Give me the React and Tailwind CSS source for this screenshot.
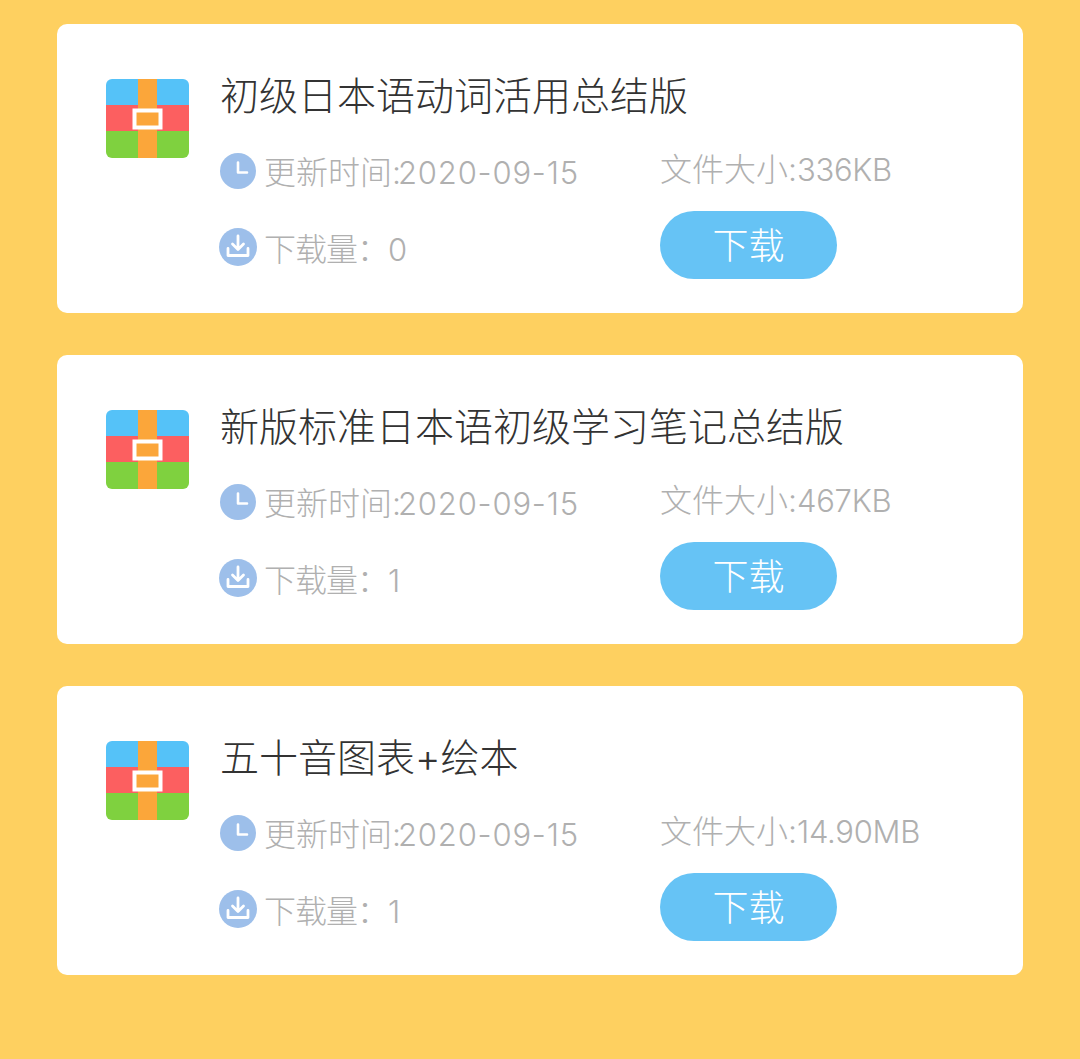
import React from 'react';

const files = [
  { title: '初级日本语动词活用总结版', size: '336KB', downloads: 0 },
  { title: '新版标准日本语初级学习笔记总结版', size: '467KB', downloads: 1 },
  { title: '五十音图表+绘本', size: '14.90MB', downloads: 1 },
];

const ArchiveIcon = () => (
  <svg width="83" height="79" viewBox="0 0 83 79" className="shrink-0 mt-[6px]">
    <defs>
      <clipPath id="archive-clip">
        <rect width="83" height="79" rx="6" />
      </clipPath>
    </defs>
    <g clipPath="url(#archive-clip)">
      <rect width="83" height="26" fill="#55c2f8" />
      <rect y="26" width="83" height="26" fill="#fc5f60" />
      <rect y="52" width="83" height="27" fill="#7fd13f" />
      <rect x="32" width="19" height="79" fill="#fba63a" />
    </g>
    <rect x="28.5" y="31.5" width="26" height="17" fill="#fba63a" stroke="#fff" strokeWidth="4" />
  </svg>
);

const ClockIcon = () => (
  <svg width="36" height="36" viewBox="0 0 36 36" className="shrink-0">
    <circle cx="18" cy="18" r="18" fill="#9dbfea" />
    <path d="M18 9.5V19.5H27" fill="none" stroke="#fff" strokeWidth="2.6" strokeLinecap="round" strokeLinejoin="round" />
  </svg>
);

const DownloadIcon = () => (
  <svg width="38" height="38" viewBox="0 0 38 38" className="shrink-0">
    <circle cx="19" cy="19" r="19" fill="#9dbfea" />
    <path d="M19 8V21M13.5 16L19 21.5L24.5 16" fill="none" stroke="#fff" strokeWidth="2.8" strokeLinecap="round" strokeLinejoin="round" />
    <path d="M9 20.5V27.5H29V20.5" fill="none" stroke="#fff" strokeWidth="2.8" strokeLinecap="round" strokeLinejoin="round" />
  </svg>
);

const FileCard = ({ file }) => (
  <div className="h-[289px] bg-white rounded-[10px] pl-[49px] pt-[49px] flex gap-[31px]">
    <ArchiveIcon />
    <div className="flex-1">
      <div className="h-[46px] text-[39px] leading-[46px] text-[#333333] font-light">{file.title}</div>
      <div className="grid grid-cols-[440px_1fr] mt-[32px] h-[36px] items-center">
        <div className="flex items-center gap-[8px]">
          <ClockIcon />
          <span className="text-[32px] leading-[36px] text-[#b0b0b0] font-light mt-[4px] whitespace-nowrap">
            更新时间:<span className="text-[31px] tracking-[0.8px] -ml-[3px]">2020-09-15</span>
          </span>
        </div>
        <span className="text-[32px] leading-[36px] text-[#b0b0b0] font-light whitespace-nowrap -mt-[2px]">
          文件大小:<span className="text-[31px] tracking-[-0.3px]">{file.size}</span>
        </span>
      </div>
      <div className="grid grid-cols-[440px_1fr] mt-[24px] items-center">
        <div className="flex items-center gap-[7px] -ml-[1px] mt-[4px]">
          <DownloadIcon />
          <span className="text-[32px] leading-[36px] text-[#b0b0b0] font-light mt-[6px] tracking-[-1px]">
            下载量：<span className="text-[31px]">{file.downloads}</span>
          </span>
        </div>
        <button className="w-[177px] h-[68px] rounded-full bg-[#66c3f5] text-white text-[36px] leading-[68px] font-light pt-[1px]">下载</button>
      </div>
    </div>
  </div>
);

export default function App() {
  return (
    <div className="h-[1059px] bg-[#fed060] pt-[24px] px-[57px] w-[1080px] font-['Inter','Noto_Sans_CJK_SC',sans-serif]">
      <div className="w-[966px] flex flex-col gap-[42px]">
        {files.map((file) => <FileCard key={file.title} file={file} />)}
      </div>
    </div>
  );
}
